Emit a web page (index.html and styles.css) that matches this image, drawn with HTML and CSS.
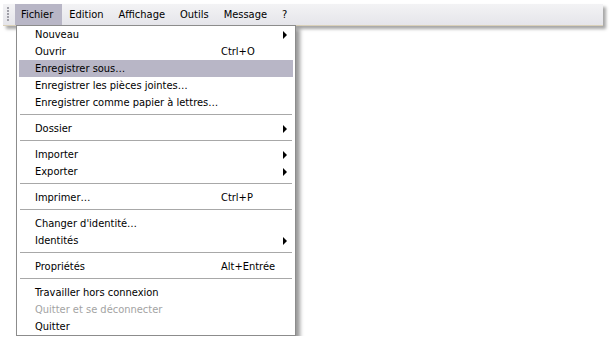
FILE: index.html
```html
<!DOCTYPE html>
<html lang="fr">
<head>
	<meta charset="UTF-8">
	<title>Menu Fichier</title>
	<link rel="stylesheet" href="styles.css">
</head>
<body>
	<div class="menubar">
		<div class="grip"></div>
		<div class="bar-item open">Fichier</div>
		<div class="bar-item">Edition</div>
		<div class="bar-item">Affichage</div>
		<div class="bar-item">Outils</div>
		<div class="bar-item">Message</div>
		<div class="bar-item">?</div>
	</div>

	<div class="dropdown">
		<div class="row"><span>Nouveau</span><span></span><span class="arrow"></span></div>
		<div class="row"><span>Ouvrir</span><span>Ctrl+O</span></div>
		<div class="row active"><span>Enregistrer sous&hellip;</span></div>
		<div class="row"><span>Enregistrer les pi&egrave;ces jointes&hellip;</span></div>
		<div class="row"><span>Enregistrer comme papier &agrave; lettres&hellip;</span></div>
		<div class="sep"></div>
		<div class="row"><span>Dossier</span><span></span><span class="arrow"></span></div>
		<div class="sep"></div>
		<div class="row"><span>Importer</span><span></span><span class="arrow"></span></div>
		<div class="row"><span>Exporter</span><span></span><span class="arrow"></span></div>
		<div class="sep"></div>
		<div class="row"><span>Imprimer&hellip;</span><span>Ctrl+P</span></div>
		<div class="sep"></div>
		<div class="row"><span>Changer d&#39;identit&eacute;&hellip;</span></div>
		<div class="row"><span>Identit&eacute;s</span><span></span><span class="arrow"></span></div>
		<div class="sep"></div>
		<div class="row"><span>Propri&eacute;t&eacute;s</span><span>Alt+Entr&eacute;e</span></div>
		<div class="sep"></div>
		<div class="row"><span>Travailler hors connexion</span></div>
		<div class="row disabled"><span>Quitter et se d&eacute;connecter</span></div>
		<div class="row"><span>Quitter</span></div>
	</div>
</body>
</html>
```

FILE: styles.css
```css
body {
	margin: 0;
	padding: 4px 0 0 3px;
	background-color: #ffffff;
	font-family: "DejaVu Sans Condensed", "Liberation Sans", sans-serif;
	font-size: 11px;
	color: #000000;
}

.menubar {
	display: flex;
	width: 600px;
	height: 21px;
	border-bottom: 1px solid #d9d0b9;
	background: linear-gradient(to bottom, #f3f3f5, #e5e5ea);
	box-shadow: 3px 3px 3px rgba(0, 0, 0, 0.35);
}

.grip {
	width: 2px;
	height: 15px;
	margin: 3px 6px 0 4px;
	background: repeating-linear-gradient(to bottom, #a0a0a8 0, #a0a0a8 2px, transparent 2px, transparent 3px);
}

.bar-item {
	display: flex;
	align-items: center;
	padding: 0 8px 0 7px;
}

.bar-item.open {
	background-color: #b8b6c6;
	padding: 0 9px 0 6px;
}

.dropdown {
	width: 274px;
	margin: -1px 0 0 13px;
	padding: 0 2px;
	background-color: #ffffff;
	border: 1px solid #8c8c8c;
	box-shadow: 4px 4px 4px rgba(0, 0, 0, 0.4);
}

.row {
	display: grid;
	grid-template-columns: 186px 1fr 4px;
	align-items: center;
	height: 17px;
	padding: 0 6px 0 16px;
	white-space: nowrap;
}

.row.active {
	background-color: #b8b6c6;
}

.row.disabled {
	color: #a3a3a3;
}

.arrow {
	width: 0;
	height: 0;
	border-left: 4px solid #000000;
	border-top: 4px solid transparent;
	border-bottom: 4px solid transparent;
}

.sep {
	margin: 3px 1px 5px 1px;
	border-top: 1px solid #a8a8a8;
}
```
